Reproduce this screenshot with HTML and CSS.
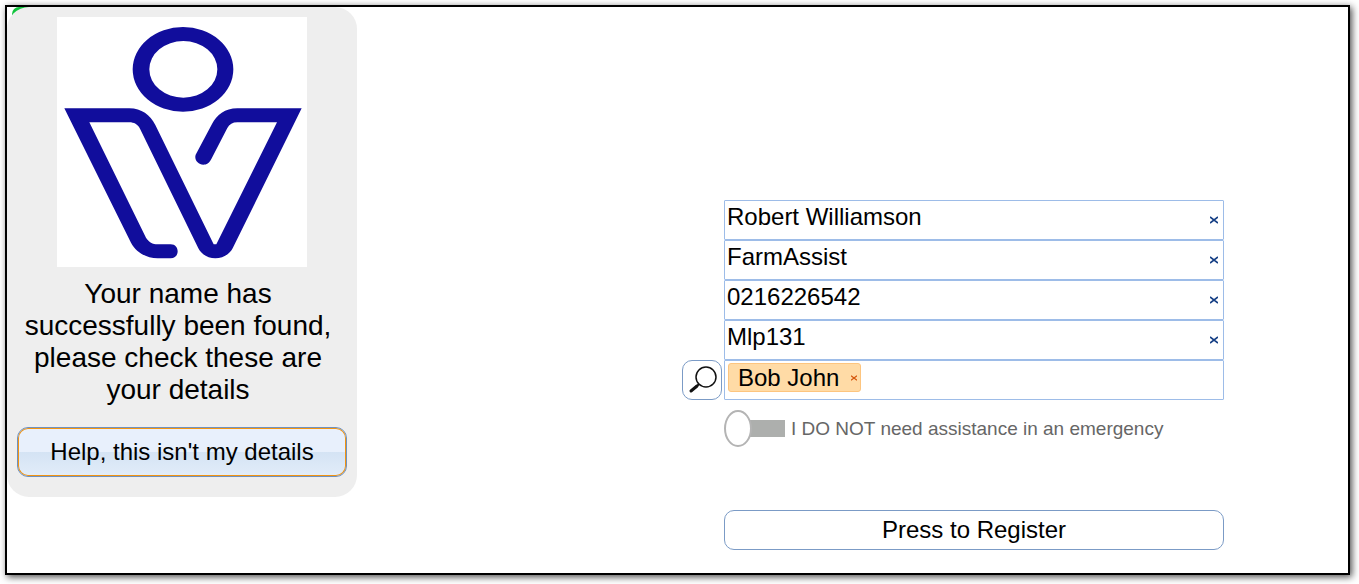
FILE: index.html
```html
<!DOCTYPE html>
<html lang="en">
<head>
    <meta charset="UTF-8">
    <meta name="viewport" content="width=device-width, initial-scale=1.0">
    <title>Check your details</title>
    <link rel="stylesheet" href="styles.css">
</head>
<body>
    <main class="frame">
        <aside class="panel">
            <svg class="logo" viewBox="171 51 750 750" role="img" aria-label="Logo">
                <path fill-rule="evenodd" d="M398 208a151 127 0 1 0 302 0a151 127 0 1 0 -302 0zM448 208a102 85 0 1 0 204 0a102 85 0 1 0 -204 0z"/>
                <path d="M193 325H388C425 325 450 345 466 375L641 733H649L831 367H712C698 367 688 373 682 384L634 477C627 490 620 494 610 494C594 494 582 480 587 464L636 372C650 345 675 325 712 325H905L698 745C690 762 668 775 646 775C624 775 603 762 595 745L420 386C413 373 402 367 388 367H268L438 713C446 726 458 733 473 733H512C540 733 540 775 512 775H473C440 775 408 757 393 728Z"/>
            </svg>
            <p class="message">Your name has successfully been found, please check these are your details</p>
            <button type="button" class="help">Help, this isn't my details</button>
        </aside>

        <form class="details">
            <div class="field">
                <input type="text" aria-label="Name" value="Robert Williamson">
                <button type="button" class="clear" aria-label="Clear name">
                    <svg viewBox="0 0 8 8"><path d="M0 1L8 7M8 1L0 7"/></svg>
                </button>
            </div>
            <div class="field">
                <input type="text" aria-label="Company" value="FarmAssist">
                <button type="button" class="clear" aria-label="Clear company">
                    <svg viewBox="0 0 8 8"><path d="M0 1L8 7M8 1L0 7"/></svg>
                </button>
            </div>
            <div class="field">
                <input type="text" aria-label="Phone" value="0216226542">
                <button type="button" class="clear" aria-label="Clear phone">
                    <svg viewBox="0 0 8 8"><path d="M0 1L8 7M8 1L0 7"/></svg>
                </button>
            </div>
            <div class="field">
                <input type="text" aria-label="Vehicle registration" value="Mlp131">
                <button type="button" class="clear" aria-label="Clear vehicle registration">
                    <svg viewBox="0 0 8 8"><path d="M0 1L8 7M8 1L0 7"/></svg>
                </button>
            </div>

            <button type="button" class="search" aria-label="Search host">
                <svg viewBox="0 0 38 38">
                    <circle cx="23" cy="16" r="10"/>
                    <path class="neck" d="M16 23l-4 4"/>
                    <path class="handle" d="M14 25l-6 5"/>
                </svg>
            </button>
            <div class="field host">
                <span class="tag">Bob John
                    <button type="button" class="remove" aria-label="Remove Bob John">
                        <svg viewBox="0 0 8 8"><path d="M0 1L8 7M8 1L0 7"/></svg>
                    </button>
                </span>
                <input type="text" aria-label="Host">
            </div>

            <div class="assist">
                <input type="checkbox" id="assist" class="switch">
                <label for="assist">I DO NOT need assistance in an emergency</label>
            </div>

            <button type="submit" class="register">Press to Register</button>
        </form>
    </main>
</body>
</html>
```
FILE: styles.css
```css
*,
*::before{
    box-sizing: border-box;
    margin: 0;
    padding: 0;
}
body{
    padding: 5px 9px 9px 5px;
    background-color: #fff;
    color: #000;
    font-family: "Liberation Sans", Arial, sans-serif;
    font-size: 24px;
}
button,
input{
    font: inherit;
    color: inherit;
}
button{
    cursor: pointer;
}
.frame{
    position: relative;
    z-index: 0;
    display: flex;
    align-items: flex-start;
    justify-content: space-between;
    min-height: calc(100vh - 14px);
    border: 2px solid #000;
    background-color: #fff;
    box-shadow: 2px 2px 7px rgba(0, 0, 0, 0.7);
}
/* green marker behind the panel corner */
.frame::before{
    content: "";
    position: absolute;
    z-index: -1;
    top: 0;
    left: 5px;
    width: 20px;
    height: 20px;
    border-radius: 7px 0 0 0;
    background-color: #0fc43c;
}

/*==== left panel ====*/
.panel{
    display: flex;
    flex-direction: column;
    flex: none;
    width: 350px;
    padding: 10px 10px 20px;
    border-radius: 22px;
    background-color: #eee;
}
.logo{
    align-self: center;
    width: 250px;
    height: 250px;
    background-color: #fff;
    fill: #110d9c;
}
.message{
    margin: 11px 8px 21px 0;
    font-size: 28px;
    line-height: 32px;
    text-align: center;
}
.help{
    height: 50px;
    border: 1px solid #6f92c0;
    border-radius: 11px;
    background: linear-gradient(#e8f0fc 0%, #e8f0fc 50%, #d4e3f4 50%, #e2edf9 100%);
    box-shadow: inset 0 0 0 1px #f29412;
}

/*==== details form ====*/
.details{
    display: grid;
    grid-template-columns: 40px minmax(0, 500px);
    column-gap: 2px;
    margin: 193px 124px 23px 24px;
}
.field,
.assist,
.register{
    grid-column: 2;
}
.field{
    display: flex;
    align-items: flex-start;
    height: 40px;
    border: 1px solid #9dbce8;
    border-radius: 1px;
}
.field input{
    flex: 1;
    min-width: 0;
    height: 32px;
    padding-left: 2px;
    border: none;
    outline: none;
    background: none;
}
.clear,
.remove{
    display: flex;
    align-items: center;
    justify-content: center;
    border: none;
    background: none;
    color: #153f85;
}
.clear{
    width: 18px;
    height: 38px;
}
.clear svg,
.remove svg{
    width: 8px;
    height: 8px;
    fill: none;
    stroke: currentColor;
    stroke-width: 1.6;
}
.search{
    grid-column: 1;
    width: 40px;
    height: 40px;
    border: 1px solid #7b9bc6;
    border-radius: 10px;
    background-color: #fff;
}
.search svg{
    display: block;
    width: 38px;
    height: 38px;
    fill: none;
    stroke: #111;
    stroke-width: 1.5;
}
.search .neck{
    stroke-width: 2;
}
.search .handle{
    stroke-width: 3;
    stroke-linecap: round;
}
.tag{
    display: flex;
    align-items: center;
    justify-content: space-between;
    width: 133px;
    height: 29px;
    margin: 2px 0 0 3px;
    padding-left: 9px;
    border: 1px solid #fdc57f;
    border-radius: 3px;
    background-color: #ffdba6;
    line-height: 27px;
}
.remove{
    width: 12px;
    height: 27px;
    color: #d4550c;
}
.remove svg{
    width: 6px;
    height: 6px;
}
.assist{
    display: flex;
    align-items: center;
    gap: 6px;
    margin: 10px 0 63px;
    color: #666;
    font-size: 19px;
}
.switch{
    appearance: none;
    display: flex;
    align-items: center;
    flex: none;
    width: 61px;
    height: 37px;
    background: linear-gradient(#adafad, #adafad) 20px 10px / 41px 17px no-repeat;
    cursor: pointer;
}
.switch::before{
    content: "";
    width: 28px;
    height: 37px;
    border: 2px solid #b4b4b4;
    border-radius: 50%;
    background-color: #fff;
}
.switch:checked::before{
    margin-left: auto;
}
.register{
    height: 40px;
    border: 1px solid #7b9bc6;
    border-radius: 10px;
    background-color: #fff;
}

@media (max-width: 900px){
    .frame{
        flex-direction: column;
    }
    .details{
        margin: 24px;
    }
}
```
